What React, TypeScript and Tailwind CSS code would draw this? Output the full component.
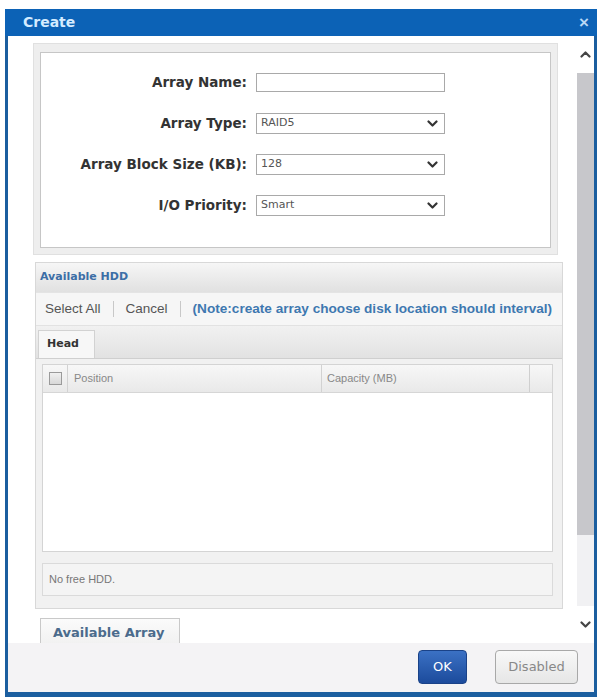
import React from "react";

const verdana = { fontFamily: '"DejaVu Sans", Verdana, sans-serif' };
const arial = { fontFamily: '"Liberation Sans", Arial, sans-serif' };

function Chevron({ up = false, className = "" }: { up?: boolean; className?: string }) {
  return (
    <svg width="11" height="7" viewBox="0 0 11 7" className={className}>
      <path
        d={up ? "M1.5 5.5 L5.5 1.5 L9.5 5.5" : "M1.5 1.5 L5.5 5.5 L9.5 1.5"}
        fill="none"
        stroke="currentColor"
        strokeWidth="2.2"
        strokeLinecap="round"
        strokeLinejoin="round"
      />
    </svg>
  );
}

function Select({ value }: { value: string }) {
  return (
    <div className="w-[189px] h-[21px] border border-[#a9a9a9] bg-white flex items-center justify-between pl-[4px] pr-[6px]">
      <span className="text-[11px] text-[#555]" style={verdana}>{value}</span>
      <Chevron className="text-[#333]" />
    </div>
  );
}

function FieldRow({ label, children }: { label: string; children: React.ReactNode }) {
  return (
    <div className="flex items-center h-[21px]">
      <div className="w-[206px] text-right text-[13.5px] font-bold text-[#333]" style={verdana}>
        {label}
      </div>
      <div className="ml-[9px]">{children}</div>
    </div>
  );
}

export default function App() {
  return (
    <div className="w-[600px] h-[700px] bg-white pt-[9px] pl-[5px]">
      <div className="w-[592px] h-[688px] flex flex-col border-x-[3px] border-b-[5px] border-[#1b5e9f] bg-white">
        {/* title bar */}
        <div className="h-[27px] -mx-[3px] bg-[#0c62b6] flex items-center justify-between pl-[18px] pr-[8px]">
          <span className="text-[14px] font-bold text-[#d4ebff]" style={verdana}>Create</span>
          <span className="text-[17px] font-bold text-[#b9d8f5] leading-none" style={arial}>×</span>
        </div>

        {/* scrollable body */}
        <div className="h-[607px] flex">
          <div className="w-[569px] h-full overflow-hidden bg-white">
            {/* array settings */}
            <div className="mt-[7px] ml-[25px] w-[525px] border border-[#e0e0e0] bg-[#eeeeee] px-[6px] pt-[8px] pb-[6px]">
              <div className="h-[196px] border border-[#c6c6c6] bg-white pt-[19px] flex flex-col gap-[20px]">
                <FieldRow label="Array Name:">
                  <div className="w-[189px] h-[19px] border border-[#a9a9a9] bg-white" />
                </FieldRow>
                <FieldRow label="Array Type:">
                  <Select value="RAID5" />
                </FieldRow>
                <FieldRow label="Array Block Size (KB):">
                  <Select value="128" />
                </FieldRow>
                <FieldRow label="I/O Priority:">
                  <Select value="Smart" />
                </FieldRow>
              </div>
            </div>

            {/* available hdd */}
            <div className="mt-[7px] ml-[27px] w-[528px] border border-[#d8d8d8]">
              <div className="h-[30px] bg-gradient-to-b from-[#f6f6f6] to-[#e1e1e1] flex items-center pl-[4px] border-b border-[#e4e4e4]">
                <span className="text-[11px] font-bold text-[#3c6ea6]" style={verdana}>Available HDD</span>
              </div>
              <div className="h-[33px] bg-[#f6f6f6] flex items-center pl-[9px] text-[13.5px] border-b border-[#e2e2e2]" style={arial}>
                <span className="text-[#555]">Select All</span>
                <span className="mx-[12px] h-[16px] w-px bg-[#c8c8c8]" />
                <span className="text-[#555]">Cancel</span>
                <span className="mx-[12px] h-[16px] w-px bg-[#c8c8c8]" />
                <span className="font-bold text-[#3e78b0] text-[13.6px]">(Note:create array choose disk location should interval)</span>
              </div>
              <div className="h-[32px] bg-gradient-to-b from-[#f1f1f1] to-[#e2e2e2] flex items-end pl-[2px]">
                <div className="h-[28px] w-[57px] bg-[#f7f7f7] border-x border-t border-[#d2d2d2] flex items-center pl-[8px]">
                  <span className="text-[11px] font-bold text-[#333]" style={verdana}>Head</span>
                </div>
              </div>
              <div className="bg-[#f1f1f1] border-t border-[#cfcfcf] pl-[6px] pr-[9px] pt-[5px] pb-[12px]">
                <div className="border border-[#d4d4d4] bg-white">
                  <div className="h-[28px] flex bg-gradient-to-b from-[#f7f7f7] to-[#e9e9e9] border-b border-[#d6d6d6] text-[11px] text-[#888]" style={arial}>
                    <div className="w-[25px] flex items-center justify-center border-r border-[#d2d2d2]">
                      <div className="w-[13px] h-[13px] border border-[#9a9a9a] bg-gradient-to-b from-[#f0f0f0] to-[#d8d8d8]" />
                    </div>
                    <div className="w-[254px] flex items-center pl-[6px] border-r border-[#d2d2d2]">Position</div>
                    <div className="w-[208px] flex items-center pl-[5px] border-r border-[#cfcfcf]">Capacity (MB)</div>
                    <div className="flex-1" />
                  </div>
                  <div className="h-[158px] bg-white" />
                </div>
                <div className="mt-[11px] h-[33px] border border-[#dadada] bg-[#f4f4f4] flex items-center pl-[6px]">
                  <span className="text-[11px] text-[#777]" style={arial}>No free HDD.</span>
                </div>
              </div>
            </div>

            {/* available array tab */}
            <div className="mt-[9px] ml-[32px] w-[140px] h-[32px] border border-[#c9c9c9] bg-gradient-to-b from-[#fbfbfb] to-[#efefef] flex items-start pt-[4px] pl-[12px]">
              <span className="text-[13px] font-bold text-[#4b6b8c]" style={verdana}>Available Array</span>
            </div>
          </div>

          {/* scrollbar */}
          <div className="w-[17px] h-full flex flex-col bg-white">
            <div className="h-[37px] flex items-center justify-center text-[#444]">
              <Chevron up />
            </div>
            <div className="h-[462px] bg-[#c7c7cb]" />
            <div className="flex-1 bg-[#f1f1f3]" />
            <div className="h-[37px] flex items-center justify-center text-[#444] bg-white">
              <Chevron />
            </div>
          </div>
        </div>

        {/* footer buttons */}
        <div className="flex-1 bg-[#f4f3f5] flex items-start justify-end pt-[7px] pr-[16px] gap-[28px]">
          <button
            className="w-[49px] h-[34px] rounded-[4px] bg-gradient-to-b from-[#3b71c4] to-[#1c4b9c] border border-[#1a4288] text-white text-[13px]"
            style={verdana}
          >
            OK
          </button>
          <button
            className="w-[83px] h-[34px] rounded-[4px] bg-gradient-to-b from-[#f8f8f8] to-[#e6e6e6] border border-[#a8a8a8] text-[#888] text-[13px]"
            style={verdana}
          >
            Disabled
          </button>
        </div>
      </div>
    </div>
  );
}
